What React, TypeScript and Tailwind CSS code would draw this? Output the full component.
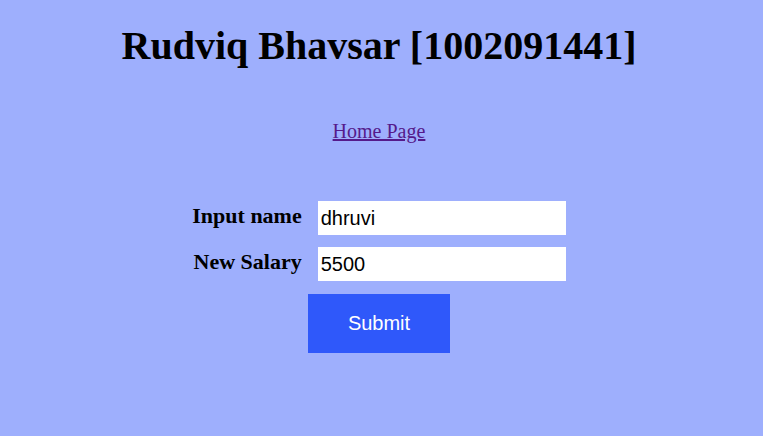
export default function App() {
  return (
    <div className="min-h-[436px] w-full bg-[#9eaffd] pr-[5px] pt-[22px] font-['Liberation_Serif',serif] text-black">
      <h1 className="text-center text-[40px] font-bold leading-[48px]">Rudviq Bhavsar [1002091441]</h1>

      <div className="mt-[50px] text-center text-[20px] leading-[23px]">
        <a href="#" className="text-[#551a8b] underline">Home Page</a>
      </div>

      <div className="mt-[58px] flex flex-col items-center">
        <div className="grid grid-cols-[auto_248px] items-center gap-x-[16px] gap-y-[12px]">
          <label className="pb-[4px] text-right text-[22px] font-bold leading-[26px]">Input name</label>
          <input
            defaultValue="dhruvi"
            className="h-[34px] bg-white px-[3px] font-['Liberation_Sans',sans-serif] text-[20px] text-black outline-none"
          />
          <label className="pb-[4px] text-right text-[22px] font-bold leading-[26px]">New Salary</label>
          <input
            defaultValue="5500"
            className="h-[34px] bg-white px-[3px] font-['Liberation_Sans',sans-serif] text-[20px] text-black outline-none"
          />
        </div>
        <button className="mt-[13px] h-[59px] w-[142px] bg-[#2f58fa] pb-[2px] font-['Liberation_Sans',sans-serif] text-[20px] text-white">
          Submit
        </button>
      </div>
    </div>
  );
}
